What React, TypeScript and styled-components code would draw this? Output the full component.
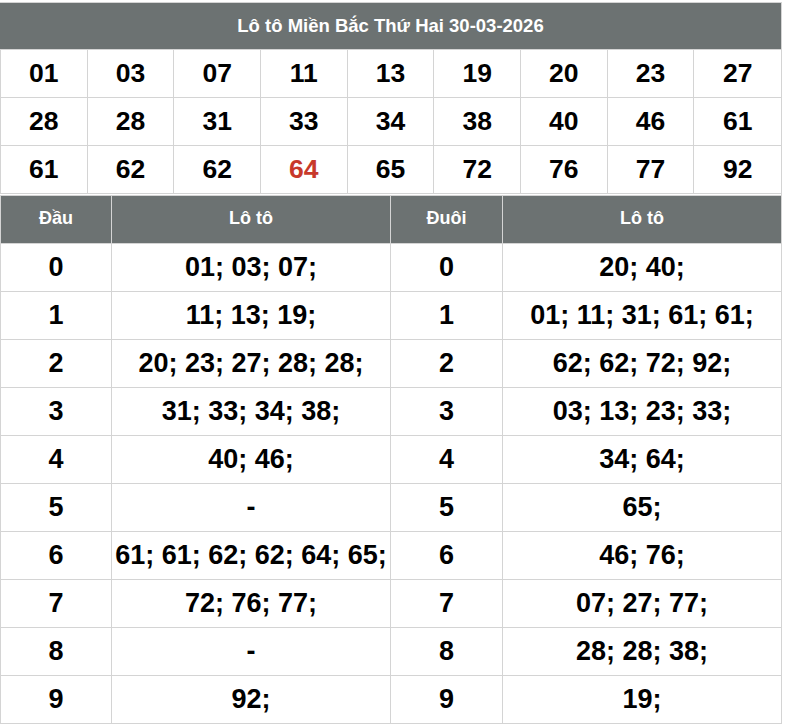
import React from 'react'
import styled, { createGlobalStyle } from 'styled-components'

const GlobalStyle = createGlobalStyle`
    body {
        margin: 0;
        background: #fff;
        font-family: 'Liberation Sans', Arial, sans-serif;
    }
    * {
        box-sizing: border-box;
    }
`

const Board = styled.div`
    width: 782px;
    margin-top: 2px;
    border-top: 1px solid #d4d4d4;
    border-right: 1px solid #d4d4d4;
`

const Title = styled.div`
    height: 47px;
    display: flex;
    align-items: center;
    justify-content: center;
    background: #6c7272;
    color: #fff;
    font-size: 18.5px;
    font-weight: 700;
    border-bottom: 1px solid #d4d4d4;
`

const NumberGrid = styled.div`
    display: grid;
    grid-template-columns: repeat(9, 1fr);
    border-left: 1px solid #d4d4d4;
`

const NumberCell = styled.div<{ $hot: boolean }>`
    height: 48px;
    display: flex;
    align-items: center;
    justify-content: center;
    border-right: 1px solid #d4d4d4;
    border-bottom: 1px solid #d4d4d4;
    font-size: 26.5px;
    font-weight: 700;
    color: ${(p) => (p.$hot ? '#c8392b' : '#000')};
    &:nth-child(9n) {
        border-right: none;
    }
`

const Table = styled.div`
    display: grid;
    grid-template-columns: 111px 279px 112px 1fr;
    margin-top: 1px;
    border-top: 1px solid #d4d4d4;
    border-left: 1px solid #d4d4d4;
`

const HeadCell = styled.div`
    height: 48px;
    display: flex;
    align-items: center;
    justify-content: center;
    background: #6c7272;
    color: #fff;
    font-size: 18px;
    font-weight: 700;
    padding-bottom: 2px;
    border-right: 1px solid #d4d4d4;
    border-bottom: 1px solid #d4d4d4;
    &:nth-child(4n) {
        border-right: none;
    }
`

const BodyCell = styled.div`
    height: 48px;
    display: flex;
    align-items: center;
    justify-content: center;
    color: #000;
    font-size: 27px;
    font-weight: 700;
    white-space: nowrap;
    border-right: 1px solid #d4d4d4;
    border-bottom: 1px solid #d4d4d4;
    &:nth-child(4n) {
        border-right: none;
    }
`

const numbers = [
    '01', '03', '07', '11', '13', '19', '20', '23', '27',
    '28', '28', '31', '33', '34', '38', '40', '46', '61',
    '61', '62', '62', '64', '65', '72', '76', '77', '92',
]

const heads = ['01; 03; 07;', '11; 13; 19;', '20; 23; 27; 28; 28;', '31; 33; 34; 38;', '40; 46;', '-', '61; 61; 62; 62; 64; 65;', '72; 76; 77;', '-', '92;']
const tails = ['20; 40;', '01; 11; 31; 61; 61;', '62; 62; 72; 92;', '03; 13; 23; 33;', '34; 64;', '65;', '46; 76;', '07; 27; 77;', '28; 28; 38;', '19;']

export default function App() {
    return (
        <>
            <GlobalStyle />
            <Board>
                <Title>Lô tô Miền Bắc Thứ Hai 30-03-2026</Title>
                <NumberGrid>
                    {numbers.map((n, i) => (
                        <NumberCell key={i} $hot={i === 21}>
                            {n}
                        </NumberCell>
                    ))}
                </NumberGrid>
                <Table>
                    <HeadCell>Đầu</HeadCell>
                    <HeadCell>Lô tô</HeadCell>
                    <HeadCell>Đuôi</HeadCell>
                    <HeadCell>Lô tô</HeadCell>
                    {heads.map((h, i) => (
                        <React.Fragment key={i}>
                            <BodyCell>{i}</BodyCell>
                            <BodyCell>{h}</BodyCell>
                            <BodyCell>{i}</BodyCell>
                            <BodyCell>{tails[i]}</BodyCell>
                        </React.Fragment>
                    ))}
                </Table>
            </Board>
        </>
    )
}
